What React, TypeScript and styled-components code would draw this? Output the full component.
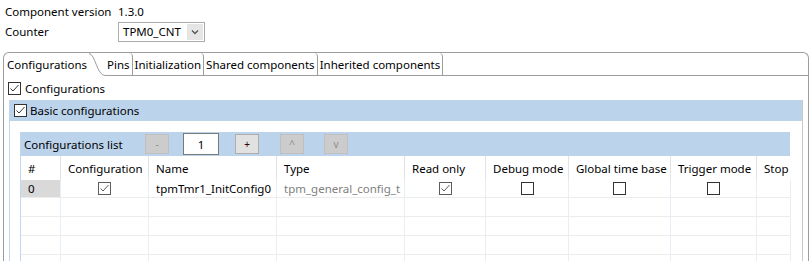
import React from 'react'
import styled, { createGlobalStyle } from 'styled-components'

const GlobalStyle = createGlobalStyle`
  html, body {
    margin: 0;
    padding: 0;
    background: #ffffff;
  }
  body {
    font-family: 'Noto Sans', 'Open Sans', sans-serif;
    font-size: 11.5px;
    color: #000000;
    overflow: hidden;
  }
`

const Page = styled.div`
  width: 811px;
  height: 261px;
  overflow: hidden;
  box-sizing: border-box;
`

const InfoGrid = styled.div`
  display: grid;
  grid-template-columns: 113px auto;
  grid-template-rows: 20px 21px;
  align-items: center;
  padding: 1px 0 0 5px;
`

const Select = styled.div`
  display: flex;
  align-items: center;
  width: 87px;
  height: 20px;
  box-sizing: border-box;
  border: 1px solid #acacac;
  background: #ffffff;
  padding-left: 4px;
  justify-self: start;
`

const SelectText = styled.span`
  flex: 1;
`

const SelectArrow = styled.span`
  display: flex;
  align-items: center;
  justify-content: center;
  width: 16px;
  height: 16px;
  margin-right: 1px;
  background: #e5e5e5;
`

const Folder = styled.div`
  margin: 10px 0 0 3px;
  width: 806px;
  height: 220px;
  box-sizing: border-box;
  border: 1px solid #9d9d9d;
  border-bottom: none;
  border-radius: 6px 6px 0 0;
`

const TabBar = styled.div`
  display: flex;
  height: 23px;
`

const ActiveTab = styled.div`
  display: flex;
  align-items: center;
  padding-left: 3px;
  width: 82px;
`

const TabCurve = styled.svg`
  display: block;
  flex: none;
`

const Tab = styled.div`
  display: flex;
  align-items: center;
  padding: 0 2px;
  box-sizing: border-box;
  border-bottom: 1px solid #9d9d9d;
  border-right: 1px solid #9d9d9d;
  border-top-right-radius: 4px;
`

const TabFiller = styled.div`
  flex: 1;
  border-bottom: 1px solid #9d9d9d;
`

const CheckRow = styled.label`
  display: flex;
  align-items: center;
  gap: 4px;
  height: 24px;
  padding-left: 4px;
`

const Group = styled.div<{ $left: number; $right: number; $edge?: string }>`
  margin-left: ${p => p.$left}px;
  margin-right: ${p => p.$right}px;
  border-left: 1px solid #c3d6ed;
  border-right: 1px solid ${p => p.$edge ?? 'transparent'};
`

const Band = styled.div<{ $height: number; $pad: number }>`
  display: flex;
  align-items: center;
  gap: 3px;
  height: ${p => p.$height}px;
  padding-left: ${p => p.$pad}px;
  background: #bcd3ec;
`

const GroupBody = styled.div<{ $top: number }>`
  padding-top: ${p => p.$top}px;
`

const ListTitle = styled.span`
  width: 118px;
`

const SmallButton = styled.div<{ $gap: number; $enabled?: boolean }>`
  display: flex;
  align-items: center;
  justify-content: center;
  width: 24px;
  height: 20px;
  box-sizing: border-box;
  margin-left: ${p => p.$gap}px;
  border: 1px solid ${p => (p.$enabled ? '#adadad' : '#bfbfbf')};
  background: ${p => (p.$enabled ? '#e1e1e1' : '#cccccc')};
  color: ${p => (p.$enabled ? '#3a0000' : '#8c8c8c')};
  font-size: 10px;
`

const NumberBox = styled.div`
  display: flex;
  align-items: center;
  justify-content: center;
  width: 36px;
  height: 22px;
  box-sizing: border-box;
  margin-left: 11px;
  border: 1px solid #7a7a7a;
  background: #ffffff;
`

const Table = styled.div`
  display: grid;
  grid-template-columns: 40px 88px 128px 128px 81px 83px 102px 86px 34px;
  grid-template-rows: 24px 18px;
  grid-auto-rows: 19px;
`

const HeadCell = styled.div`
  display: flex;
  align-items: center;
  padding-left: 7px;
  white-space: nowrap;
  border-right: 1px solid #e3e3e3;
  &:nth-child(9) {
    border-right: none;
  }
`

const Cell = styled.div<{ $center?: boolean; $shade?: boolean; $muted?: boolean }>`
  display: flex;
  align-items: center;
  justify-content: ${p => (p.$center ? 'center' : 'flex-start')};
  padding-left: ${p => (p.$center ? 0 : 7)}px;
  box-sizing: border-box;
  white-space: nowrap;
  overflow: hidden;
  border-right: 1px solid #e6eef8;
  border-bottom: 1px solid #ececec;
  background: ${p => (p.$shade ? '#d9d9d9' : 'transparent')};
  color: ${p => (p.$muted ? '#808080' : '#000000')};
`

const Box = styled.span<{ $tone: string }>`
  display: inline-flex;
  width: 13px;
  height: 13px;
  box-sizing: border-box;
  border: 1px solid ${p => p.$tone};
  background: #ffffff;
  flex: none;
`

const CheckBox = ({ checked, tone = '#333333' }: { checked?: boolean; tone?: string }) => (
  <Box $tone={tone}>
    {checked && (
      <svg width="11" height="11" viewBox="0 0 11 11">
        <polyline points="1.5,5.5 4,8 9.5,2" fill="none" stroke={tone} strokeWidth="1" />
      </svg>
    )}
  </Box>
)

const columns = ['#', 'Configuration', 'Name', 'Type', 'Read only', 'Debug mode', 'Global time base', 'Trigger mode', 'Stop']

export default function App() {
  const emptyRows = [0, 1, 2, 3]
  return (
    <Page>
      <GlobalStyle />
      <InfoGrid>
        <span>Component version</span>
        <span>1.3.0</span>
        <span>Counter</span>
        <Select>
          <SelectText>TPM0_CNT</SelectText>
          <SelectArrow>
            <svg width="8" height="6" viewBox="0 0 8 6">
              <polyline points="1,1.5 4,4.5 7,1.5" fill="none" stroke="#555555" strokeWidth="1.3" />
            </svg>
          </SelectArrow>
        </Select>
      </InfoGrid>

      <Folder>
        <TabBar>
          <ActiveTab>Configurations</ActiveTab>
          <TabCurve width="16" height="23" viewBox="0 0 16 23">
            <path d="M0 0.5 C 6 0.5, 8 22.5, 16 22.5" fill="none" stroke="#9d9d9d" strokeWidth="1" />
          </TabCurve>
          <Tab>Pins</Tab>
          <Tab>Initialization</Tab>
          <Tab>Shared components</Tab>
          <Tab>Inherited components</Tab>
          <TabFiller />
        </TabBar>

        <CheckRow>
          <CheckBox checked />
          <span>Configurations</span>
        </CheckRow>

        <Group $left={5} $right={5} $edge="#c9c9c9">
          <Band $height={21} $pad={4}>
            <CheckBox checked />
            <span>Basic configurations</span>
          </Band>
          <GroupBody $top={11}>
            <Group $left={10} $right={11}>
              <Band $height={24} $pad={3}>
                <ListTitle>Configurations list</ListTitle>
                <SmallButton $gap={0}>-</SmallButton>
                <NumberBox>1</NumberBox>
                <SmallButton $gap={13} $enabled>+</SmallButton>
                <SmallButton $gap={18}>^</SmallButton>
                <SmallButton $gap={17}>v</SmallButton>
              </Band>
              <Table>
                {columns.map(c => (
                  <HeadCell key={c}>{c}</HeadCell>
                ))}
                <Cell $shade>0</Cell>
                <Cell $center>
                  <CheckBox checked tone="#5c5c5c" />
                </Cell>
                <Cell>tpmTmr1_InitConfig0</Cell>
                <Cell $muted>tpm_general_config_t</Cell>
                <Cell $center>
                  <CheckBox checked tone="#5c5c5c" />
                </Cell>
                <Cell $center>
                  <CheckBox />
                </Cell>
                <Cell $center>
                  <CheckBox />
                </Cell>
                <Cell $center>
                  <CheckBox />
                </Cell>
                <Cell />
                {emptyRows.map(r =>
                  columns.map(c => <Cell key={`${r}-${c}`} />)
                )}
              </Table>
            </Group>
          </GroupBody>
        </Group>
      </Folder>
    </Page>
  )
}
